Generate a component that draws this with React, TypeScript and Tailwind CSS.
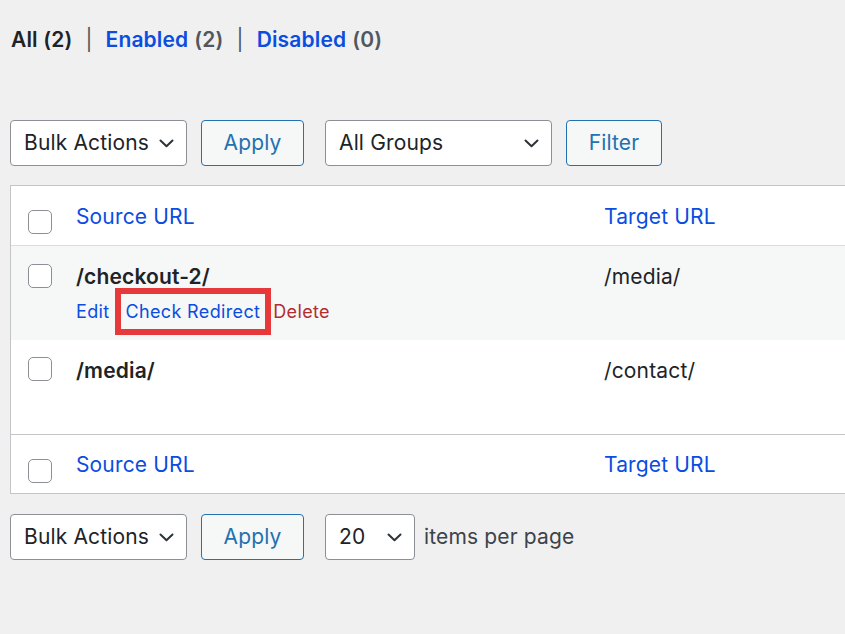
import { useState } from "react";

const font = { fontFamily: "Inter, 'Noto Sans', Arial, sans-serif" };

function Chevron() {
  return (
    <svg width="15" height="9" viewBox="0 0 15 9" fill="none" className="shrink-0">
      <path d="M1.5 1.5L7.5 7.2L13.5 1.5" stroke="#2c3338" strokeWidth="2" strokeLinecap="round" strokeLinejoin="round" />
    </svg>
  );
}

function Select({ label, width }: { label: string; width: string }) {
  return (
    <div
      className={`${width} flex h-[46px] items-center justify-between rounded-[4px] border border-[#8c8f94] bg-white pl-[13px] pr-[12px] text-[21px] tracking-[0.15px] text-[#1d2327]`}
    >
      <span>{label}</span>
      <Chevron />
    </div>
  );
}

function Button({ label, width }: { label: string; width: string }) {
  return (
    <button
      className={`${width} flex h-[46px] items-center justify-center rounded-[4px] border border-[#2271b1] bg-[#f6f7f7] text-[21px] tracking-[0.15px] text-[#2271b1]`}
    >
      {label}
    </button>
  );
}

function Checkbox() {
  const [on, setOn] = useState(false);
  return (
    <span
      onClick={() => setOn(!on)}
      className={`block h-[24px] w-[24px] shrink-0 rounded-[5px] border border-[#8c8f94] ${on ? "bg-[#2271b1]" : "bg-white"}`}
    />
  );
}

function ColumnRow({ height, pt }: { height: string; pt: string }) {
  return (
    <div className={`flex ${height} items-center bg-white`}>
      <div className="w-[65px] pl-[17px] pt-[13px]">
        <Checkbox />
      </div>
      <a className={`w-[528px] ${pt} text-[21px] text-[#0a4de0]`}>Source URL</a>
      <a className={`${pt} text-[21px] text-[#0a4de0]`}>Target URL</a>
    </div>
  );
}

export default function App() {
  return (
    <div className="min-h-screen overflow-hidden bg-[#f0f0f1] pb-[74px] pl-[10px] tracking-[0.15px]" style={font}>
      {/* status filters */}
      <div className="flex pl-[1px] pt-[26px] text-[21px] font-semibold leading-[28px]">
        <span className="text-[#1d2327]">All (2)</span>
        <span className="mx-[13px] font-normal text-[#50575e]">|</span>
        <a className="text-[#0a4de0]">Enabled</a>
        <span className="ml-[6px] text-[#50575e]">(2)</span>
        <span className="mx-[13px] font-normal text-[#50575e]">|</span>
        <a className="text-[#0a4de0]">Disabled</a>
        <span className="ml-[6px] text-[#50575e]">(0)</span>
      </div>

      {/* top toolbar */}
      <div className="mt-[66px] flex items-center">
        <Select label="Bulk Actions" width="w-[177px]" />
        <div className="ml-[14px]">
          <Button label="Apply" width="w-[103px]" />
        </div>
        <div className="ml-[21px]">
          <Select label="All Groups" width="w-[227px]" />
        </div>
        <div className="ml-[14px]">
          <Button label="Filter" width="w-[96px]" />
        </div>
      </div>

      {/* redirects table */}
      <div className="mt-[19px] w-[900px] border-y border-l border-[#c3c4c7]">
        <ColumnRow height="h-[59px]" pt="pt-[2px]" />
        <div className="border-t border-[#dcdcde]" />

        <div className="flex h-[94px] bg-[#f6f7f7]">
          <div className="w-[65px] pl-[17px] pt-[18px]">
            <Checkbox />
          </div>
          <div className="w-[528px] pt-[19px]">
            <div className="text-[21px] font-semibold leading-[24px] text-[#1d2327]">/checkout-2/</div>
            <div className="-mt-[1px] flex items-center text-[18px] tracking-[0.35px]">
              <a className="text-[#0a4de0]">Edit</a>
              <span className="ml-[5px] flex h-[47px] items-center border-[6px] border-[#e8393a] px-[5px]">
                <a className="text-[#0a4de0]">Check Redirect</a>
              </span>
              <a className="ml-[2px] text-[#b32d2e]">Delete</a>
            </div>
          </div>
          <div className="pt-[18px] text-[21px] leading-[26px] text-[#1d2327]">/media/</div>
        </div>

        <div className="flex h-[94px] bg-white">
          <div className="w-[65px] pl-[17px] pt-[17px]">
            <Checkbox />
          </div>
          <div className="w-[528px] pt-[18px] text-[21px] font-semibold leading-[26px] text-[#1d2327]">/media/</div>
          <div className="pt-[18px] text-[21px] leading-[26px] text-[#1d2327]">/contact/</div>
        </div>

        <div className="border-t border-[#c3c4c7]" />
        <ColumnRow height="h-[58px]" pt="pt-[1px]" />
      </div>

      {/* bottom toolbar */}
      <div className="mt-[20px] flex items-center">
        <Select label="Bulk Actions" width="w-[177px]" />
        <div className="ml-[14px]">
          <Button label="Apply" width="w-[103px]" />
        </div>
        <div className="ml-[21px]">
          <Select label="20" width="w-[90px]" />
        </div>
        <span className="ml-[9px] text-[21px] text-[#3c434a]">items per page</span>
      </div>
    </div>
  );
}
